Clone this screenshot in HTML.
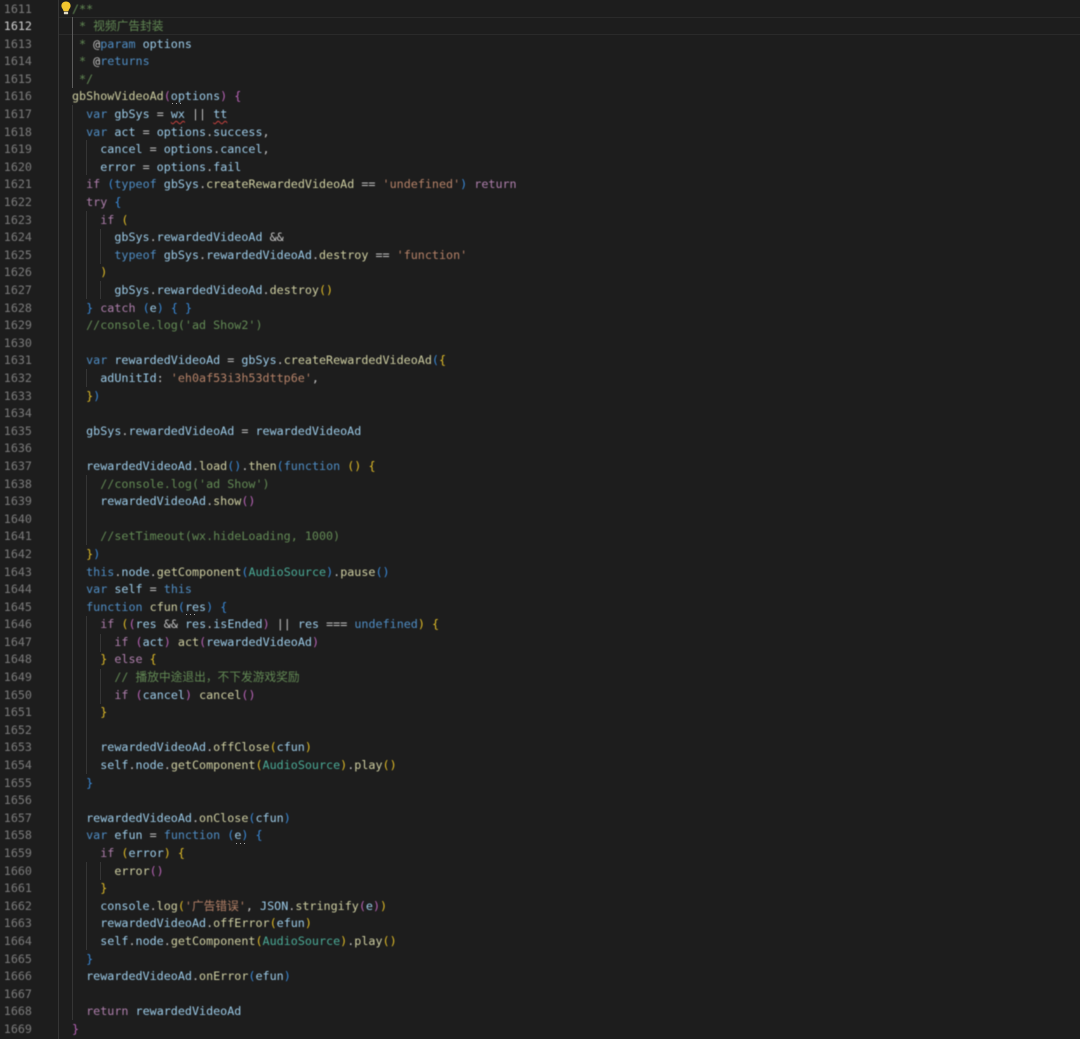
<!DOCTYPE html>
<html lang="zh">
<head>
<meta charset="utf-8">
<title>Code</title>
<style>
html,body{margin:0;padding:0;background:#1d1d1d;width:1080px;height:1039px;overflow:hidden}
#e{position:relative;width:1080px;height:1039px;overflow:hidden;background:#1d1d1d;font-family:"DejaVu Sans Mono","Liberation Mono","Noto Sans CJK SC",monospace;font-size:11.72px}
#n{position:absolute;left:0;top:0.5px;width:32px;text-align:right;color:#7c7c7c;line-height:17.6px;white-space:pre;filter:blur(.4px)}
#n b{font-weight:normal;color:#d0d0d0}
#c{position:absolute;left:72px;top:0.5px;white-space:pre;color:#9ccbe8;margin:0;font:inherit;line-height:17.6px;filter:blur(.4px)}
#hl{position:absolute;left:58px;right:0;top:17px;height:16px;border-top:1px solid #2a2a2a;border-bottom:1px solid #2a2a2a}
.g{position:absolute;width:1px;background:#353535}
.a{background:#5c5c5c}
.k{color:#4f8dc4}.p{color:#ad7eab}.f{color:#cfcfa2}.s{color:#b58268}.m{color:#638a55}.t{color:#4bab97}.w{color:#c4c4c4}
.y{color:#e0bc28}.u{color:#b864b6}.l{color:#3a8ad8}
.q{text-decoration:underline wavy #c8423f 1px;text-underline-offset:2px}
.h{position:absolute;width:1px;height:1px;background:#aaa;box-shadow:4px 0 0 #aaa,8px 0 0 #aaa}
svg{position:absolute}
</style>
</head>
<body>
<div id="e">
<div id="hl"></div>
<div class="g" style="left:58px;top:0;height:1039px"></div>
<div class="g a" style="left:72px;top:17px;height:71px"></div>
<div class="g" style="left:72px;top:105px;height:915px"></div>
<div class="g" style="left:86px;top:140px;height:35px"></div>
<div class="g" style="left:86px;top:211px;height:88px"></div>
<div class="g" style="left:86px;top:369px;height:18px"></div>
<div class="g" style="left:86px;top:475px;height:70px"></div>
<div class="g" style="left:86px;top:616px;height:158px"></div>
<div class="g" style="left:86px;top:862px;height:88px"></div>
<div class="g" style="left:100px;top:229px;height:35px"></div>
<div class="g" style="left:100px;top:281px;height:18px"></div>
<div class="g" style="left:100px;top:634px;height:18px"></div>
<div class="g" style="left:100px;top:669px;height:35px"></div>
<div class="g" style="left:100px;top:862px;height:18px"></div>
<div class="h" style="left:172px;top:103px"></div>
<div class="h" style="left:186px;top:614px"></div>
<div class="h" style="left:236px;top:843px"></div>
<svg style="left:60px;top:1px" width="12" height="14" viewBox="0 0 12 14"><path d="M6 0.5C3.2 0.5 1.4 2.5 1.4 4.8c0 2.2 1.7 3.2 2.2 5.4h4.8c.5-2.2 2.2-3.2 2.2-5.4C10.600 2.500 8.800.5 6 .5z" fill="#f2c62f"/><rect x="3.900" y="10.800" width="4.200" height="2.400" rx=".6" fill="#e0dcc8"/></svg>
<div id="n">1611
<b>1612</b>
1613
1614
1615
1616
1617
1618
1619
1620
1621
1622
1623
1624
1625
1626
1627
1628
1629
1630
1631
1632
1633
1634
1635
1636
1637
1638
1639
1640
1641
1642
1643
1644
1645
1646
1647
1648
1649
1650
1651
1652
1653
1654
1655
1656
1657
1658
1659
1660
1661
1662
1663
1664
1665
1666
1667
1668
1669</div>
<pre id="c"><span class="m">/**</span>
<span class="m"> * 视频广告封装</span>
<span class="m"> * </span><span class="w">@</span><span class="k">param</span> options
<span class="m"> * </span><span class="w">@</span><span class="k">returns</span>
<span class="m"> */</span>
<span class="f">gbShowVideoAd</span><span class="u">(</span>options<span class="u">)</span> <span class="u">{</span>
  <span class="k">var</span> gbSys <span class="w">=</span> <span class="q">wx</span> <span class="w">||</span> <span class="q">tt</span>
  <span class="k">var</span> act <span class="w">=</span> options<span class="w">.</span>success<span class="w">,</span>
    cancel <span class="w">=</span> options<span class="w">.</span>cancel<span class="w">,</span>
    error <span class="w">=</span> options<span class="w">.</span>fail
  <span class="p">if</span> <span class="l">(</span><span class="k">typeof</span> gbSys<span class="w">.</span><span class="f">createRewardedVideoAd</span> <span class="w">==</span> <span class="s">'undefined'</span><span class="l">)</span> <span class="p">return</span>
  <span class="p">try</span> <span class="l">{</span>
    <span class="p">if</span> <span class="y">(</span>
      gbSys<span class="w">.</span>rewardedVideoAd <span class="w">&amp;&amp;</span>
      <span class="k">typeof</span> gbSys<span class="w">.</span>rewardedVideoAd<span class="w">.</span><span class="f">destroy</span> <span class="w">==</span> <span class="s">'function'</span>
    <span class="y">)</span>
      gbSys<span class="w">.</span>rewardedVideoAd<span class="w">.</span><span class="f">destroy</span><span class="y">()</span>
  <span class="l">}</span> <span class="p">catch</span> <span class="l">(</span>e<span class="l">)</span> <span class="l">{ }</span>
  <span class="m">//console.log('ad Show2')</span>

  <span class="k">var</span> rewardedVideoAd <span class="w">=</span> gbSys<span class="w">.</span><span class="f">createRewardedVideoAd</span><span class="l">(</span><span class="y">{</span>
    adUnitId<span class="w">:</span> <span class="s">'eh0af53i3h53dttp6e'</span><span class="w">,</span>
  <span class="y">}</span><span class="l">)</span>

  gbSys<span class="w">.</span>rewardedVideoAd <span class="w">=</span> rewardedVideoAd

  rewardedVideoAd<span class="w">.</span><span class="f">load</span><span class="l">()</span><span class="w">.</span><span class="f">then</span><span class="l">(</span><span class="k">function</span> <span class="y">()</span> <span class="y">{</span>
    <span class="m">//console.log('ad Show')</span>
    rewardedVideoAd<span class="w">.</span><span class="f">show</span><span class="u">()</span>

    <span class="m">//setTimeout(wx.hideLoading, 1000)</span>
  <span class="y">}</span><span class="l">)</span>
  <span class="k">this</span><span class="w">.</span>node<span class="w">.</span><span class="f">getComponent</span><span class="l">(</span><span class="t">AudioSource</span><span class="l">)</span><span class="w">.</span><span class="f">pause</span><span class="l">()</span>
  <span class="k">var</span> self <span class="w">=</span> <span class="k">this</span>
  <span class="k">function</span> <span class="f">cfun</span><span class="l">(</span>res<span class="l">)</span> <span class="l">{</span>
    <span class="p">if</span> <span class="y">(</span><span class="u">(</span>res <span class="w">&amp;&amp;</span> res<span class="w">.</span>isEnded<span class="u">)</span> <span class="w">||</span> res <span class="w">===</span> <span class="k">undefined</span><span class="y">)</span> <span class="y">{</span>
      <span class="p">if</span> <span class="u">(</span>act<span class="u">)</span> <span class="f">act</span><span class="u">(</span>rewardedVideoAd<span class="u">)</span>
    <span class="y">}</span> <span class="p">else</span> <span class="y">{</span>
      <span class="m">// 播放中途退出，不下发游戏奖励</span>
      <span class="p">if</span> <span class="u">(</span>cancel<span class="u">)</span> <span class="f">cancel</span><span class="u">()</span>
    <span class="y">}</span>

    rewardedVideoAd<span class="w">.</span><span class="f">offClose</span><span class="y">(</span>cfun<span class="y">)</span>
    self<span class="w">.</span>node<span class="w">.</span><span class="f">getComponent</span><span class="y">(</span><span class="t">AudioSource</span><span class="y">)</span><span class="w">.</span><span class="f">play</span><span class="y">()</span>
  <span class="l">}</span>

  rewardedVideoAd<span class="w">.</span><span class="f">onClose</span><span class="l">(</span>cfun<span class="l">)</span>
  <span class="k">var</span> efun <span class="w">=</span> <span class="k">function</span> <span class="l">(</span>e<span class="l">)</span> <span class="l">{</span>
    <span class="p">if</span> <span class="y">(</span>error<span class="y">)</span> <span class="y">{</span>
      <span class="f">error</span><span class="u">()</span>
    <span class="y">}</span>
    console<span class="w">.</span><span class="f">log</span><span class="y">(</span><span class="s">'广告错误'</span><span class="w">,</span> JSON<span class="w">.</span><span class="f">stringify</span><span class="u">(</span>e<span class="u">)</span><span class="y">)</span>
    rewardedVideoAd<span class="w">.</span><span class="f">offError</span><span class="y">(</span>efun<span class="y">)</span>
    self<span class="w">.</span>node<span class="w">.</span><span class="f">getComponent</span><span class="y">(</span><span class="t">AudioSource</span><span class="y">)</span><span class="w">.</span><span class="f">play</span><span class="y">()</span>
  <span class="l">}</span>
  rewardedVideoAd<span class="w">.</span><span class="f">onError</span><span class="l">(</span>efun<span class="l">)</span>

  <span class="p">return</span> rewardedVideoAd
<span class="u">}</span></pre>
</div>
</body>
</html>
